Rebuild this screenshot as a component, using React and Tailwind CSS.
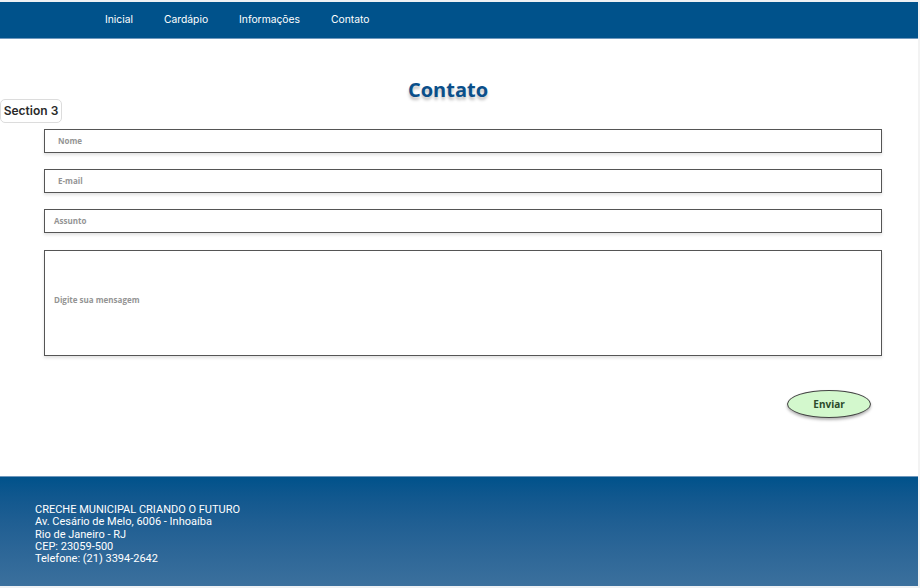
import React from "react";

const navItems = ["Inicial", "Cardápio", "Informações", "Contato"];

function Field({ label, pl = "pl-[13px]" }) {
  return (
    <div className={`h-[24px] border border-[#555] bg-white shadow-[0_2px_3px_rgba(0,0,0,0.12)] flex items-center ${pl}`}>
      <span className="text-[8px] font-bold text-[#949494] font-['Open_Sans',sans-serif]">{label}</span>
    </div>
  );
}

export default function App() {
  return (
    <div className="w-[920px] h-[588px] bg-[#f3f3f3] flex font-['Roboto',sans-serif]">
      <div className="w-[918px] h-full flex flex-col bg-white">
        <div className="h-[2px] bg-[#eef1f4]" />
        <nav className="h-[37px] bg-[#00528b] border-b border-[#6f98bd] flex items-center pl-[105px] gap-[31px] text-[10.3px] text-white font-['Inter',sans-serif]">
          {navItems.map((n) => (
            <span key={n}>{n}</span>
          ))}
        </nav>

        <main className="flex-1 flex flex-col">
          <h2 className="mt-[39px] text-center pr-[22px] text-[20px] leading-[24px] font-bold text-[#0a4f8a] font-['Open_Sans',sans-serif] [text-shadow:0_3px_3px_rgba(0,0,0,0.25)]">
            Contato
          </h2>
          <div className="mt-[-3px] w-[62px] h-[24px] border border-[#dcdcdc] rounded-[5px] flex items-center justify-center text-[12px] font-semibold text-[#2a2a2a] font-['Inter',sans-serif]">
            Section 3
          </div>
          <div className="ml-[44px] w-[838px] mt-[6px] flex flex-col gap-[16px]">
            <Field label="Nome" />
            <Field label="E-mail" />
            <Field label="Assunto" pl="pl-[9px]" />
            <div className="mt-[1px] h-[106px] border border-[#555] bg-white shadow-[0_2px_3px_rgba(0,0,0,0.12)] flex items-center pl-[9px] pb-[6px]">
              <span className="text-[8px] font-bold text-[#949494] font-['Open_Sans',sans-serif]">Digite sua mensagem</span>
            </div>
          </div>
          <div className="flex justify-end pr-[47px] mt-[34px]">
            <button className="w-[84px] h-[28px] rounded-[50%] border border-[#444] bg-[#d3f8cd] shadow-[0_2px_3px_rgba(0,0,0,0.3)] text-[10px] font-bold text-[#2c4a2c] font-['Noto_Sans',sans-serif]">
              Enviar
            </button>
          </div>
        </main>

        <footer className="h-[110px] border-t border-[#6f98bd] bg-gradient-to-b from-[#00528b] to-[#3b709d] pl-[35px] pt-[27px] text-[11px] leading-[12.3px] text-white">
          <p>CRECHE MUNICIPAL CRIANDO O FUTURO</p>
          <p>Av. Cesário de Melo, 6006 - Inhoaíba</p>
          <p>Rio de Janeiro - RJ</p>
          <p>CEP: 23059-500</p>
          <p>Telefone: (21) 3394-2642</p>
        </footer>
        <div className="h-[2px] bg-[#eef1f4]" />
      </div>
    </div>
  );
}
